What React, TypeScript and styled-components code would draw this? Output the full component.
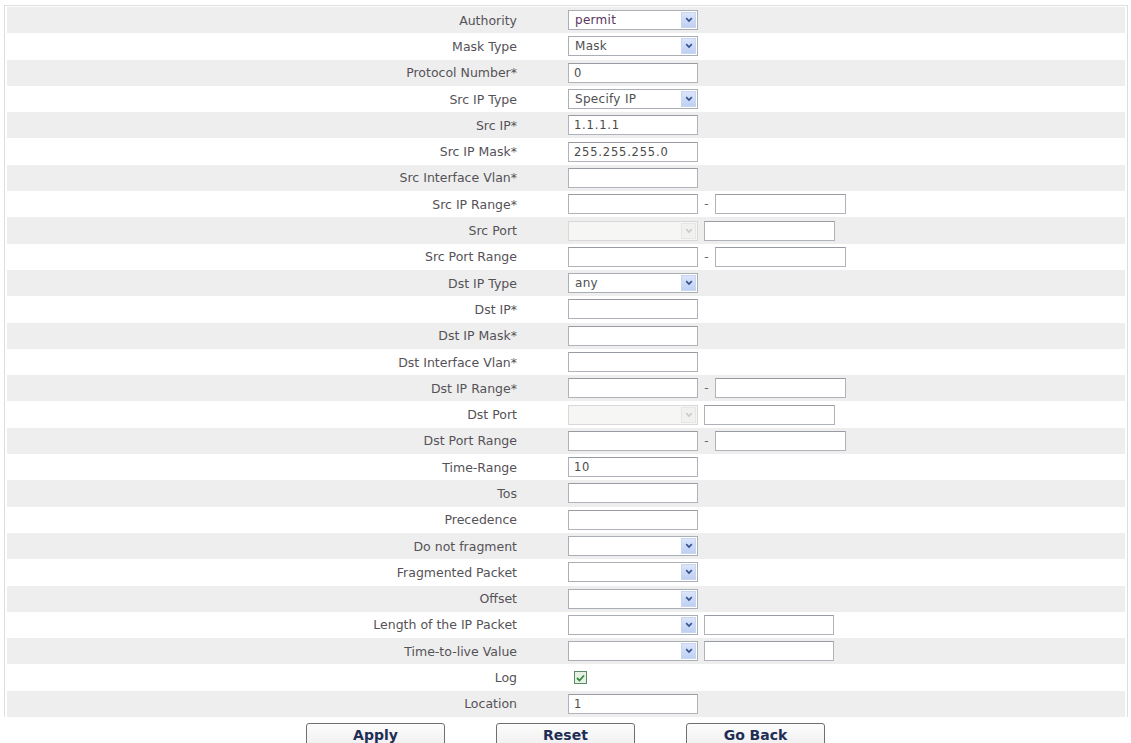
import React from "react"
import styled, { createGlobalStyle } from "styled-components"

const Global = createGlobalStyle`
  html, body {
    margin: 0;
    padding: 0;
    background: #ffffff;
    overflow: hidden;
  }
  body {
    font-family: "DejaVu Sans", Verdana, sans-serif;
  }
`

const Page = styled.div`
  width: 1131px;
  height: 743px;
  padding: 5px 0 0 4px;
  box-sizing: border-box;
  overflow: hidden;
`

const Table = styled.div`
  width: 1124px;
  border: 1px solid #dedede;
  border-bottom: none;
  padding: 1px 2px 0 2px;
  box-sizing: border-box;
`

const Row = styled.div<{ $shade: boolean }>`
  display: grid;
  grid-template-columns: 510px 1fr;
  column-gap: 51px;
  align-items: center;
  height: 26.3px;
  background: ${p => (p.$shade ? "#eeeeee" : "#ffffff")};
`

const Label = styled.div`
  text-align: right;
  font-size: 12.5px;
  color: #555257;
  white-space: nowrap;
`

const Controls = styled.div`
  display: flex;
  align-items: center;
`

const TextInput = styled.div<{ $w?: number }>`
  width: ${p => p.$w ?? 130}px;
  height: 20px;
  box-sizing: border-box;
  border: 1px solid #b0b4ba;
  border-top-color: #979ca3;
  background: #ffffff;
  font-size: 11.5px;
  color: #4a4a4a;
  padding-left: 5px;
  line-height: 18px;
  letter-spacing: 0.8px;
`

const Select = styled.div<{ $disabled?: boolean }>`
  width: 130px;
  height: 20px;
  box-sizing: border-box;
  border: 1px solid ${p => (p.$disabled ? "#d8d8d8" : "#aaafb6")};
  background: ${p => (p.$disabled ? "#f6f6f4" : "#ffffff")};
  display: flex;
  align-items: stretch;
  justify-content: space-between;
`

const SelectText = styled.span<{ $tone?: string }>`
  font-size: 12px;
  line-height: 18px;
  padding-left: 6px;
  letter-spacing: 0.3px;
  color: ${p => p.$tone ?? "#505050"};
`

const Arrow = styled.span<{ $disabled?: boolean }>`
  width: 15px;
  margin: 1px;
  box-sizing: border-box;
  display: flex;
  align-items: center;
  justify-content: center;
  background: ${p =>
    p.$disabled ? "#f1f1ef" : "linear-gradient(#dbe5fb, #bfd0f3)"};
  border: 1px solid ${p => (p.$disabled ? "#e6e6e6" : "#c9d6f1")};
`

const Dash = styled.span`
  width: 17px;
  text-align: center;
  font-size: 12px;
  color: #666;
`

const Gap = styled.span`
  width: 6px;
`

const Check = styled.span`
  width: 13px;
  height: 13px;
  margin-left: 6px;
  box-sizing: border-box;
  border: 1px solid #5b8a69;
  background: #e6f1e4;
  display: flex;
  align-items: center;
  justify-content: center;
`

const Buttons = styled.div`
  display: flex;
  justify-content: center;
  gap: 51px;
  margin-top: 6px;
  padding-right: 4px;
`

const Button = styled.div`
  width: 139px;
  height: 28px;
  box-sizing: border-box;
  border: 1px solid #6d6f73;
  border-radius: 3px;
  background: linear-gradient(#fcfcfc, #ededed);
  font-family: "DejaVu Sans", Verdana, sans-serif;
  font-weight: bold;
  font-size: 14px;
  color: #1f2e55;
  text-align: center;
  line-height: 22px;
`

type Kind = "input" | "select" | "range" | "port" | "check"

interface Field {
  label: string
  kind: Kind
  value?: string
  tone?: string
}

const fields: Field[] = [
  { label: "Authority", kind: "select", value: "permit", tone: "#5c3560" },
  { label: "Mask Type", kind: "select", value: "Mask" },
  { label: "Protocol Number*", kind: "input", value: "0" },
  { label: "Src IP Type", kind: "select", value: "Specify IP" },
  { label: "Src IP*", kind: "input", value: "1.1.1.1" },
  { label: "Src IP Mask*", kind: "input", value: "255.255.255.0" },
  { label: "Src Interface Vlan*", kind: "input" },
  { label: "Src IP Range*", kind: "range" },
  { label: "Src Port", kind: "port" },
  { label: "Src Port Range", kind: "range" },
  { label: "Dst IP Type", kind: "select", value: "any" },
  { label: "Dst IP*", kind: "input" },
  { label: "Dst IP Mask*", kind: "input" },
  { label: "Dst Interface Vlan*", kind: "input" },
  { label: "Dst IP Range*", kind: "range" },
  { label: "Dst Port", kind: "port" },
  { label: "Dst Port Range", kind: "range" },
  { label: "Time-Range", kind: "input", value: "10" },
  { label: "Tos", kind: "input" },
  { label: "Precedence", kind: "input" },
  { label: "Do not fragment", kind: "select" },
  { label: "Fragmented Packet", kind: "select" },
  { label: "Offset", kind: "select" },
  { label: "Length of the IP Packet", kind: "select" },
  { label: "Time-to-live Value", kind: "select" },
  { label: "Log", kind: "check" },
  { label: "Location", kind: "input", value: "1" },
]

const Chevron = ({ color }: { color: string }) => (
  <svg width="8" height="6" viewBox="0 0 8 6">
    <path d="M1.2 1.2 L4 4 L6.8 1.2" fill="none" stroke={color} strokeWidth="1.7" />
  </svg>
)

const DropDown = ({ value, tone, disabled }: { value?: string; tone?: string; disabled?: boolean }) => (
  <Select $disabled={disabled}>
    <SelectText $tone={tone}>{value}</SelectText>
    <Arrow $disabled={disabled}>
      <Chevron color={disabled ? "#cbcbcb" : "#35548f"} />
    </Arrow>
  </Select>
)

// these two rows carry a second text box after the drop-down
const withExtra = ["Length of the IP Packet", "Time-to-live Value"]

const renderControl = (f: Field) => {
  switch (f.kind) {
    case "select":
      return (
        <>
          <DropDown value={f.value} tone={f.tone} />
          {withExtra.includes(f.label) && (
            <>
              <Gap />
              <TextInput />
            </>
          )}
        </>
      )
    case "range":
      return (
        <>
          <TextInput />
          <Dash>-</Dash>
          <TextInput $w={131} />
        </>
      )
    case "port":
      return (
        <>
          <DropDown disabled />
          <Gap />
          <TextInput $w={131} />
        </>
      )
    case "check":
      return (
        <Check>
          <svg width="9" height="8" viewBox="0 0 9 8">
            <path d="M1 4 L3.5 6.5 L8 1.5" fill="none" stroke="#2f8a3c" strokeWidth="1.8" />
          </svg>
        </Check>
      )
    default:
      return <TextInput>{f.value}</TextInput>
  }
}

export default function App() {
  return (
    <Page>
      <Global />
      <Table>
        {fields.map((f, i) => (
          <Row key={f.label} $shade={i % 2 === 0}>
            <Label>{f.label}</Label>
            <Controls>{renderControl(f)}</Controls>
          </Row>
        ))}
      </Table>
      <Buttons>
        <Button>Apply</Button>
        <Button>Reset</Button>
        <Button>Go Back</Button>
      </Buttons>
    </Page>
  )
}
